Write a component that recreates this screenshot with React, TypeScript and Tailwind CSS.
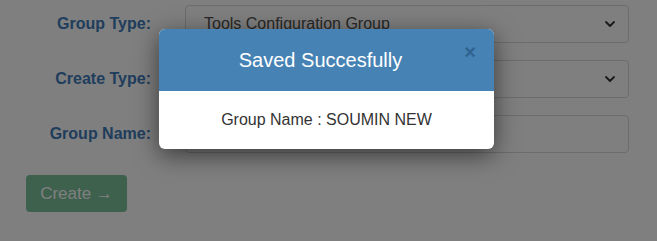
import { ChevronDown } from 'lucide-react'

/* form rows behind the modal */
const ROWS = [
  { label: 'Group Type:', value: 'Tools Configuration Group', kind: 'select' },
  { label: 'Create Type:', value: '', kind: 'select' },
  { label: 'Group Name:', value: '', kind: 'input' },
]

export default function App() {
  return (
    <div className="relative w-[657px] h-[241px] overflow-hidden bg-white font-['Liberation_Sans',Arial,sans-serif]">
      {/* Form */}
      <div className="pt-[5px] pl-[26px] pr-[28px] flex flex-col gap-[17px]">
        {ROWS.map(row => (
          <div key={row.label} className="flex items-center">
            <label className="w-[125px] text-right text-[16px] font-bold text-[#3e7ab8] whitespace-nowrap">
              {row.label}
            </label>
            <div className="ml-[34px] flex-1 h-[38px] rounded-[4px] border border-[#d8d8d8] bg-white flex items-center justify-between pl-[18px] pr-[10px] text-[16px] text-[#505050]">
              <span>{row.value}</span>
              {row.kind === 'select' && <ChevronDown size={16} strokeWidth={2.75} className="text-[#333]" />}
            </div>
          </div>
        ))}
        <div className="mt-[5px]">
          <button className="w-[101px] h-[37px] rounded-[4px] bg-[#7ac29a] text-white text-[17px]">
            Create →
          </button>
        </div>
      </div>

      {/* Overlay */}
      <div className="absolute inset-0 bg-black/50" />

      {/* Modal */}
      <div className="absolute left-[159px] top-[29px] w-[335px] rounded-[6px] overflow-hidden bg-white shadow-[0_6px_24px_rgba(0,0,0,0.55)]">
        <div className="relative h-[62px] bg-[#4682b4] flex items-center justify-center">
          <h2 className="text-[20px] text-white pr-[12px]">Saved Succesfully</h2>
          <span className="absolute right-[18px] top-[13px] text-[20px] font-bold leading-none text-[#2f6390]">×</span>
        </div>
        <div className="h-[58px] flex items-center justify-center text-[16px] text-[#333]">
          Group Name : SOUMIN NEW
        </div>
      </div>
    </div>
  )
}
